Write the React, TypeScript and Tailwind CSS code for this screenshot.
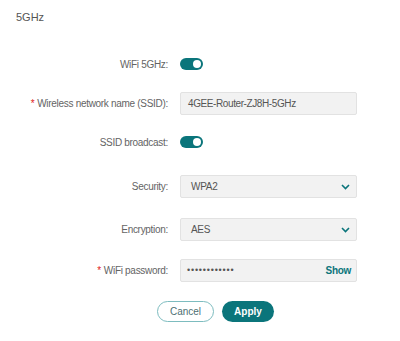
const font = { fontFamily: '"Liberation Sans", Arial, sans-serif' };

function Toggle() {
  return (
    <div className="relative h-[12px] w-[23px] rounded-full bg-[#0b757b]">
      <div className="absolute right-[2px] top-[2px] h-[8px] w-[8px] rounded-full bg-white" />
    </div>
  );
}

function Label({ text, required }: { text: string; required?: boolean }) {
  return (
    <div className="w-[168px] text-right text-[10px] tracking-[-0.3px] text-[#646464]">
      {required && <span className="mr-[3px] text-[#e02020]">*</span>}
      {text}
    </div>
  );
}

function Chevron() {
  return (
    <svg width="9" height="6" viewBox="0 0 9 6" className="text-[#0b757b]">
      <path d="M1 1l3.5 3.5L8 1" fill="none" stroke="currentColor" strokeWidth="1.6" />
    </svg>
  );
}

export default function App() {
  return (
    <div className="min-h-screen bg-white" style={font}>
      <div className="pl-4 pt-[11px] text-[11px] leading-[12px] text-[#555]">5GHz</div>

      <div className="mt-[29px] flex flex-col">
        <div className="flex h-6 items-center">
          <Label text="WiFi 5GHz:" />
          <div className="ml-3">
            <Toggle />
          </div>
        </div>

        <div className="mt-4 flex items-center">
          <Label text="Wireless network name (SSID):" required />
          <div className="ml-3 flex h-[23px] w-[177px] items-center rounded-[2px] border border-[#e2e2e2] bg-[#f2f2f2] px-[7px] text-[10px] tracking-[-0.4px] text-[#555]">
            4GEE-Router-ZJ8H-5GHz
          </div>
        </div>

        <div className="mt-[15px] flex h-6 items-center">
          <Label text="SSID broadcast:" />
          <div className="ml-3">
            <Toggle />
          </div>
        </div>

        <div className="mt-[21px] flex items-center">
          <Label text="Security:" />
          <div className="ml-3 flex h-[23px] w-[177px] items-center justify-between rounded-[2px] border border-[#e2e2e2] bg-[#f2f2f2] pl-[10px] pr-[6px] text-[10px] tracking-[-0.3px] text-[#555]">
            <span>WPA2</span>
            <Chevron />
          </div>
        </div>

        <div className="mt-5 flex items-center">
          <Label text="Encryption:" />
          <div className="ml-3 flex h-[23px] w-[177px] items-center justify-between rounded-[2px] border border-[#e2e2e2] bg-[#f2f2f2] pl-[10px] pr-[6px] text-[10px] tracking-[-0.3px] text-[#555]">
            <span>AES</span>
            <Chevron />
          </div>
        </div>

        <div className="mt-[18px] flex items-center">
          <Label text="WiFi password:" required />
          <div className="ml-3 flex h-[23px] w-[177px] items-center justify-between rounded-[2px] border border-[#e2e2e2] bg-[#f2f2f2] pl-[6px] pr-[5px] text-[10px]">
            <span className="text-[9px] tracking-[0.8px] text-[#555]">••••••••••••</span>
            <span className="font-bold tracking-[-0.3px] text-[#0b757b]">Show</span>
          </div>
        </div>

        <div className="mt-[19px] flex justify-center gap-2 pl-[31px]">
          <button className="h-[21px] w-[57px] rounded-full border border-[#7dbcbf] bg-white text-[10px] text-[#4d6f72]">
            Cancel
          </button>
          <button className="h-[21px] w-[52px] rounded-full bg-[#0b757b] text-[10px] font-bold text-white">
            Apply
          </button>
        </div>
      </div>
    </div>
  );
}
